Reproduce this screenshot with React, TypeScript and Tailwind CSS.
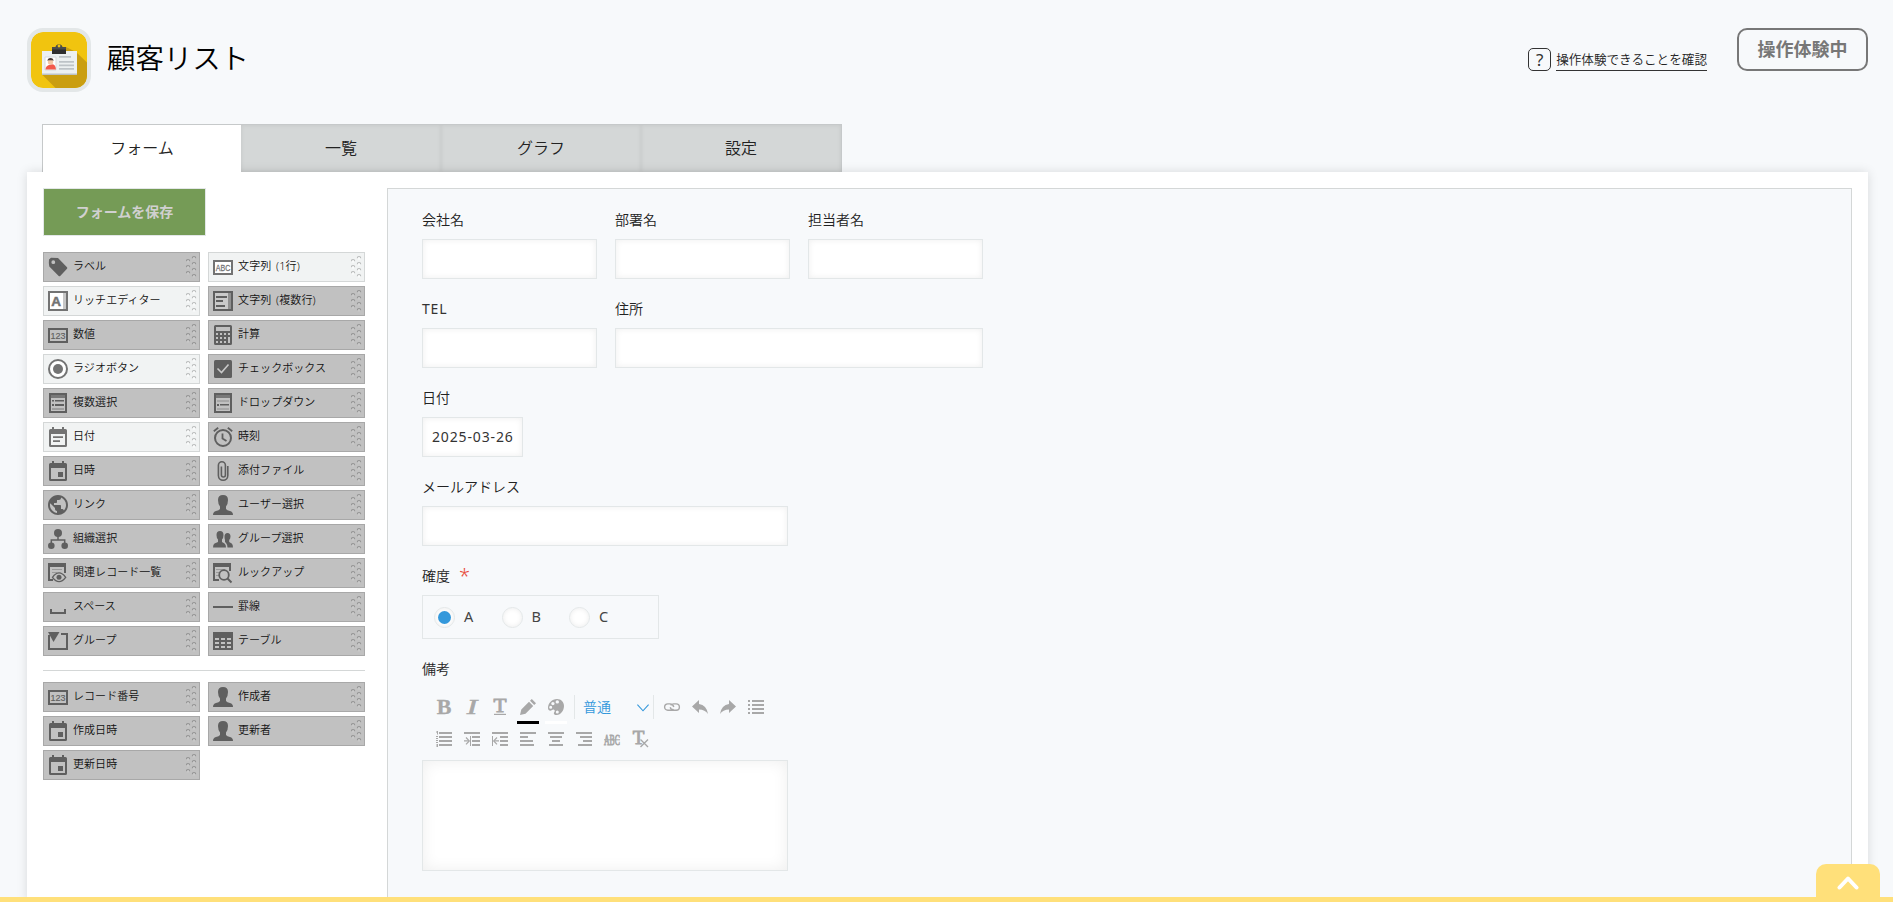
import type { ReactNode } from "react";

type Field = { label: string; icon: ReactNode; light?: boolean };

const Svg = ({ children }: { children: ReactNode }) => (
  <svg viewBox="0 0 20 20" className="h-5 w-5 shrink-0 overflow-visible" fill="currentColor">
    {children}
  </svg>
);

const icons = {
  tag: (
    <Svg>
      <path fillRule="evenodd" d="M1 2.500 3 .7 10 1l9 9.200q.7.8 0 1.500L12.200 19q-.7.7-1.500 0L1.300 9.500Q.5 6 1 2.500zM5.300 3.300a1.900 1.900 0 1 0 0 3.800 1.900 1.900 0 0 0 0-3.800z" />
    </Svg>
  ),
  abc: (
    <Svg>
      <rect x="1" y="4" width="18" height="13" fill="#fff" stroke="currentColor" strokeWidth="2" />
      <text x="10" y="14" textAnchor="middle" fontSize="9.500" stroke="currentColor" strokeWidth=".3" textLength="14.500" lengthAdjust="spacingAndGlyphs" fontFamily="Liberation Sans, sans-serif">ABC</text>
    </Svg>
  ),
  rich: (
    <Svg>
      <rect x="1" y="1" width="18" height="18" fill="#fff" stroke="currentColor" strokeWidth="2" />
      <path d="M15 2h3v16h-3z" opacity=".4" />
      <text x="8" y="14.500" textAnchor="middle" fontSize="13.500" fontWeight="700" stroke="currentColor" strokeWidth=".5" fontFamily="Liberation Sans, sans-serif">A</text>
    </Svg>
  ),
  multi: (
    <Svg>
      <path d="M1 1h18v18H1z" fill="none" stroke="currentColor" strokeWidth="2" />
      <path d="M2 2h13v16H2z" fill="#fff" opacity=".15" />
      <path d="M15 2h3v16h-3z" opacity=".5" />
      <path d="M3 5h11v2H3zM3 9h7v2H3zM3 14h9v2H3z" />
    </Svg>
  ),
  num: (
    <Svg>
      <path d="M1 4h18v13H1z" fill="none" stroke="currentColor" strokeWidth="2" />
      <text x="10" y="14" textAnchor="middle" fontSize="9.500" stroke="currentColor" strokeWidth=".15" textLength="15" lengthAdjust="spacingAndGlyphs" fontFamily="Liberation Sans, sans-serif">123</text>
    </Svg>
  ),
  calc: (
    <Svg>
      <path fillRule="evenodd" d="M2.500 0h15Q19 0 19 1.500v17q0 1.500-1.500 1.500h-15Q1 20 1 18.500v-17Q1 0 2.500 0zM3 2v4h14V2zM3 8v2h2V8zM7 8v2h2V8zM11 8v2h2V8zM15 8v2h2V8zM3 12v2h2v-2zM7 12v2h2v-2zM11 12v2h2v-2zM15 12v6h2v-6zM3 16v2h2v-2zM7 16v2h2v-2zM11 16v2h2v-2z" />
    </Svg>
  ),
  radio: (
    <Svg>
      <circle cx="10" cy="10" r="9" fill="#fff" stroke="currentColor" strokeWidth="2" />
      <circle cx="10" cy="10" r="5" />
    </Svg>
  ),
  check: (
    <Svg>
      <rect x="1" y="1" width="18" height="18" rx="1.500" />
      <path d="M4.500 9.500 8.500 13.500 15.500 5.500" fill="none" stroke="#c9c9c9" strokeWidth="1.600" />
    </Svg>
  ),
  multiSelect: (
    <Svg>
      <path d="M2 1h16v18H2z" fill="none" stroke="currentColor" strokeWidth="2" />
      <path d="M3 2h14v3H3z" opacity=".75" />
      <path d="M4 7h2v1.500H4zM7 7h9v1.500H7zM4 11h2v2H4zM7 11h9v2H7z" />
      <path d="M4 15h12v2H4z" opacity=".35" />
    </Svg>
  ),
  dropdown: (
    <Svg>
      <path d="M2 1h16v18H2z" fill="none" stroke="currentColor" strokeWidth="2" />
      <path d="M3 2h14v3H3z" opacity=".75" />
      <path d="M4 11h2v2H4zM7 11h9v1.500H7z" />
      <path d="M4 7h12v2H4zM4 15h12v2H4z" opacity=".25" />
    </Svg>
  ),
  date: (
    <Svg>
      <path fillRule="evenodd" d="M4 0h2v2h8V0h2v2h1.500Q19 2 19 3.500v15q0 1.500-1.500 1.500h-15Q1 20 1 18.500v-15Q1 2 2.500 2H4zM3 7v11h14V7z" />
      <path d="M5 9.300h10V11H5zM5 13.300h7V15H5z" />
    </Svg>
  ),
  clock: (
    <Svg>
      <circle cx="10" cy="11" r="8" fill="none" stroke="currentColor" strokeWidth="2" />
      <path d="M9.500 6.500V11.500L13.500 14M.8 4.200 5.200.8M19.200 4.200 14.800.8" fill="none" stroke="currentColor" strokeWidth="1.800" />
    </Svg>
  ),
  datetime: (
    <Svg>
      <path fillRule="evenodd" d="M4 0h2v2h8V0h2v2h1.500Q19 2 19 3.500v15q0 1.500-1.500 1.500h-15Q1 20 1 18.500v-15Q1 2 2.500 2H4zM3 7v11h14V7zM10 11h5v5h-5z" />
    </Svg>
  ),
  clip: (
    <Svg>
      <path d="M14.800 5v9.500a4.700 4.700 0 0 1-9.400 0V4.300a3.500 3.500 0 0 1 7 0V14a2 2 0 0 1-4 0V5.500" fill="none" stroke="currentColor" strokeWidth="1.600" />
    </Svg>
  ),
  globe: (
    <svg viewBox="2 2 20 20" className="h-5 w-5 shrink-0" fill="currentColor">
      <path d="M12 2C6.480 2 2 6.480 2 12s4.480 10 10 10 10-4.480 10-10S17.520 2 12 2zm-1 17.930c-3.950-.49-7-3.850-7-7.930 0-.62.080-1.210.21-1.790L9 15v1c0 1.100.9 2 2 2v1.930zm6.900-2.540c-.26-.81-1-1.390-1.900-1.390h-1v-3c0-.55-.45-1-1-1H8v-2h2c.55 0 1-.45 1-1V7h2c1.100 0 2-.9 2-2v-.41c2.930 1.190 5 4.060 5 7.410 0 2.080-.8 3.970-2.100 5.390z" />
    </svg>
  ),
  user: (
    <Svg>
      <path d="M10 0q5 0 5 5 0 4-2 6.500v2.500q1 1.300 4 2 3 .8 3 4H0q0-3.200 3-4 3-.7 4-2v-2.500Q5 9 5 5q0-5 5-5z" />
    </Svg>
  ),
  org: (
    <Svg>
      <circle cx="10" cy="4" r="4" />
      <circle cx="3.300" cy="16.700" r="3.300" />
      <circle cx="16.700" cy="16.700" r="3.300" />
      <path d="M10 7v4M3.300 14v-3h13.400v3" fill="none" stroke="currentColor" strokeWidth="1.500" />
    </Svg>
  ),
  groupUser: (
    <Svg>
      <path d="M7 2q3.500 0 3.500 4 0 3-1.500 4.500v2.500l2.500 1.500q1.500 1 1.500 4H0q0-3 1.500-4L5 13v-2.500Q3.500 9 3.500 6 3.500 2 7 2z" />
      <path d="M14.500 4q3 0 3 3.500 0 2-1.300 3.500v2l2.500 1.500q1.300 1 1.300 4h-5.500q0-3-1.500-4.500l-1-1V11Q11.500 9.500 11.500 7.500 11.500 4 14.500 4z" />
    </Svg>
  ),
  related: (
    <Svg>
      <path d="M1 1h16v9M1 1v16h4" fill="none" stroke="currentColor" strokeWidth="2" />
      <path d="M0 0h18v4H0z" />
      <path d="M4 6h10v1H4zM4 9h5v1H4z" opacity=".4" />
      <path d="M4.500 14.300Q11 5.500 17.700 14.300 11 23 4.500 14.300z" fill="#c1c1c1" stroke="currentColor" strokeWidth="1.300" />
      <circle cx="11" cy="14.300" r="2.500" />
    </Svg>
  ),
  lookup: (
    <Svg>
      <path d="M1 1h16v7M1 1v16h5" fill="none" stroke="currentColor" strokeWidth="2" />
      <path d="M0 0h18v4H0z" />
      <path d="M3 6h9v1H3zM3 9h3v1H3zM3 12h3v1H3z" opacity=".4" />
      <circle cx="11" cy="12" r="4.800" fill="#c1c1c1" stroke="currentColor" strokeWidth="1.800" />
      <path d="M14.500 15.500 18.500 19.500" stroke="currentColor" strokeWidth="2" />
    </Svg>
  ),
  space: (
    <Svg>
      <path d="M2 12h2v3h12v-3h2v5H2z" />
    </Svg>
  ),
  line: (
    <Svg>
      <path d="M0 9h20v2H0z" />
    </Svg>
  ),
  group: (
    <Svg>
      <path d="M1 4v14h18V3h-6" fill="none" stroke="currentColor" strokeWidth="2" />
      <path d="M0 1h11.500L5.500 11z" />
    </Svg>
  ),
  table: (
    <Svg>
      <path fillRule="evenodd" d="M0 1h20v18H0zM2 7v2h4V7zM8 7v2h4V7zM14 7v2h4V7zM2 11v2h4v-2zM8 11v2h4v-2zM14 11v2h4v-2zM2 15v2h4v-2zM8 15v2h4v-2zM14 15v2h4v-2z" />
    </Svg>
  ),
};

const mainFields: Field[] = [
  { label: "ラベル", icon: icons.tag },
  { label: "文字列 (1行)", icon: icons.abc, light: true },
  { label: "リッチエディター", icon: icons.rich, light: true },
  { label: "文字列 (複数行)", icon: icons.multi },
  { label: "数値", icon: icons.num },
  { label: "計算", icon: icons.calc },
  { label: "ラジオボタン", icon: icons.radio, light: true },
  { label: "チェックボックス", icon: icons.check },
  { label: "複数選択", icon: icons.multiSelect },
  { label: "ドロップダウン", icon: icons.dropdown },
  { label: "日付", icon: icons.date, light: true },
  { label: "時刻", icon: icons.clock },
  { label: "日時", icon: icons.datetime },
  { label: "添付ファイル", icon: icons.clip },
  { label: "リンク", icon: icons.globe },
  { label: "ユーザー選択", icon: icons.user },
  { label: "組織選択", icon: icons.org },
  { label: "グループ選択", icon: icons.groupUser },
  { label: "関連レコード一覧", icon: icons.related },
  { label: "ルックアップ", icon: icons.lookup },
  { label: "スペース", icon: icons.space },
  { label: "罫線", icon: icons.line },
  { label: "グループ", icon: icons.group },
  { label: "テーブル", icon: icons.table },
];

const systemFields: Field[] = [
  { label: "レコード番号", icon: icons.num },
  { label: "作成者", icon: icons.user },
  { label: "作成日時", icon: icons.datetime },
  { label: "更新者", icon: icons.user },
  { label: "更新日時", icon: icons.datetime },
];

const Grip = ({ light }: { light?: boolean }) => {
  const dots = [[2, 7], [2, 13], [2, 19], [8, 4], [8, 10], [8, 16], [8, 22]];
  return (
    <svg viewBox="0 0 11 28" className="ml-auto h-7 w-[11px] shrink-0" fill="none">
      {dots.map(([x, y]) => (
        <g key={`${x}-${y}`}>
          <circle cx={x} cy={y + 1} r="1.700" fill={light ? "#fafbfb" : "#c9c9c9"} />
          <path d={`M${x - 1.7} ${y + 1.2}a1.700 1.700 0 0 1 3.400 0`} stroke={light ? "#b9bbbb" : "#949494"} strokeWidth="1.100" />
        </g>
      ))}
    </svg>
  );
};

const Palette = ({ fields }: { fields: Field[] }) => (
  <ul className="grid grid-cols-[157px_157px] gap-x-2 gap-y-1">
    {fields.map((f) => (
      <li
        key={f.label}
        className={
          f.light
            ? "flex h-[30px] items-center border border-[#d4d7d7] bg-[#f1f3f3] pr-0.5 pl-1 text-[#737373]"
            : "flex h-[30px] items-center border border-[#a8a8a8] bg-[#c1c1c1] pr-0.5 pl-1 text-[#5f5f5f]"
        }
      >
        {f.icon}
        <span
          className={
            f.label.includes("(")
              ? "-mt-0.5 ml-[5px] text-[11px] leading-4 tracking-[0.15px] whitespace-nowrap text-[#111] [word-spacing:1.500px]"
              : "-mt-0.5 ml-[5px] text-[11px] leading-4 tracking-[0.05px] whitespace-nowrap text-[#111]"
          }
        >
          {f.label}
        </span>
        <Grip light={f.light} />
      </li>
    ))}
  </ul>
);

const FormField = ({ label, className, required, children }: { label: string; className: string; required?: boolean; children?: ReactNode }) => (
  <div className={className}>
    <div className="mb-1 flex h-[30px] items-center text-sm text-[#222]">
      <span className={label === "TEL" ? "font-normal tracking-[0.8px] text-[#333]" : ""}>{label}</span>
      {required && <span className="ml-[9px] text-[20px] leading-5 text-[#e74c3c]">*</span>}
    </div>
    {children ?? <Input />}
  </div>
);

const Input = ({ value }: { value?: string }) => (
  <div className="flex h-10 items-center border border-[#e3e7e8] bg-white px-[9px] text-sm font-normal tracking-[0.86px] whitespace-nowrap text-[#333] shadow-[inset_0_0_6px_rgba(0,0,0,0.07)]">
    {value}
  </div>
);

const Tool = ({ children, bar }: { children: ReactNode; bar?: string }) => (
  <div className="relative flex h-8 w-7 items-center justify-center text-[#a8a8a8]">
    <svg viewBox="0 0 16 16" className="h-4 w-4 overflow-visible" fill="currentColor">
      {children}
    </svg>
    {bar && <span className={`absolute bottom-[-1px] left-[3px] h-[3px] w-[22px] ${bar}`} />}
  </div>
);

const serif = "Liberation Serif, serif";

const Toolbar = () => (
  <div className="ml-2 pt-[3px]">
    <div className="flex h-8 items-center">
      <Tool><text x="8" y="15" textAnchor="middle" fontSize="22" fontWeight="700" stroke="currentColor" strokeWidth=".3" fontFamily={serif}>B</text></Tool>
      <Tool><text x="8" y="15" textAnchor="middle" fontSize="22" fontStyle="italic" stroke="currentColor" strokeWidth=".6" textLength="10.500" lengthAdjust="spacingAndGlyphs" fontFamily={serif}>I</text></Tool>
      <Tool>
        <text x="8" y="12.500" textAnchor="middle" fontSize="19" stroke="currentColor" strokeWidth=".9" textLength="13" lengthAdjust="spacingAndGlyphs" fontFamily={serif}>T</text>
        <path d="M2 14.800h12V16H2z" />
      </Tool>
      <Tool bar="bg-black">
        <path d="M0 16 1.300 10.500 9 2.800 13.200 7 5.500 14.700zM10 1.800 11.800 0 16 4.200 14.200 6z" />
      </Tool>
      <Tool bar="bg-white">
        <path fillRule="evenodd" d="M9 0c4 0 7 2.800 7 7s-3 9-7.500 9c-3 0-3-2-2-3.300C7.500 11 5.500 9.500 4 11c-1.300 1.300-4 .8-4-2C0 4 4 0 9 0zM9.300 1.200a1.700 1.700 0 1 0 0 3.400 1.700 1.700 0 0 0 0-3.400zM4.900 2.900a1.700 1.700 0 1 0 0 3.400 1.700 1.700 0 0 0 0-3.400zM2.700 6.800a1.500 1.500 0 1 0 0 3 1.500 1.500 0 0 0 0-3zM9.300 11.500a1.500 1.500 0 1 0 0 3 1.500 1.500 0 0 0 0-3z" />
      </Tool>
      <div className="ml-[4px] flex h-6 w-20 items-center border-x border-[#e3e7e8] pr-1 pl-2">
        <span className="text-sm text-[#3498db]">普通</span>
        <svg viewBox="0 0 12 8" className="mt-0.5 ml-auto h-2 w-3" fill="none" stroke="#3498db" strokeWidth="1.100">
          <path d="M.4.7 6 6.800 11.600.7" />
        </svg>
      </div>
      <div className="ml-1 flex">
        <Tool>
          <path d="M9.300 9.800A3.500 3.500 0 0 1 6 11.300H3.800a3.200 3.200 0 0 1 0-6.400H6Q9 5 9.800 8M6.700 6.400A3.500 3.500 0 0 1 10 4.900h2.200a3.200 3.200 0 0 1 0 6.400H10Q7 11.200 6.200 8.200" fill="none" stroke="currentColor" strokeWidth="1.400" />
        </Tool>
        <Tool><path d="M0 7.500 7 1v4q7.500.8 9 10-3-4.500-9-4.500V14z" /></Tool>
        <Tool><path d="M16 7.500 9 1v4q-7.500.8-9 10 3-4.500 9-4.500V14z" /></Tool>
        <Tool><path d="M0 1h2v2H0zM4 1h12v2H4zM0 5h2v2H0zM4 5h12v2H4zM0 9h2v2H0zM4 9h12v2H4zM0 13h2v2H0zM4 13h12v2H4z" /></Tool>
      </div>
    </div>
    <div className="flex h-8 items-center">
      <Tool><path d="M3 1h13v2H3zM3 5h13v2H3zM3 9h13v2H3zM3 13h13v2H3zM1 0h1v3.500H1zM0 .5h1v1H0zM0 5h2v1H0zM0 7h2v1H0zM0 9h2v1H0zM0 11h2v1H0zM.5 13h1.500v3H.5z" /></Tool>
      <Tool><path d="M0 1h16v2H0zM8 5h8v2H8zM8 9h8v2H8zM8 13h8v2H8zM6 5h1v10H6zM0 9.300h5v1.200H0z" /><path d="M2 6.500 5.300 9.900 2 13.300" fill="none" stroke="currentColor" strokeWidth="1.200" /></Tool>
      <Tool><path d="M0 1h16v2H0zM8 5h8v2H8zM8 9h8v2H8zM8 13h8v2H8zM0 5h1v10H0zM2 9.300h5v1.200H2z" /><path d="M5 6.500 1.700 9.900 5 13.300" fill="none" stroke="currentColor" strokeWidth="1.200" /></Tool>
      <Tool><path d="M0 1h16v2H0zM0 5h8v2H0zM0 9h13v2H0zM0 13h8v2H0zM8 13h6v2H8z" /></Tool>
      <Tool><path d="M0 1h16v2H0zM2 5h12v2H2zM4 9h8v2H4zM1 13h14v2H1z" /></Tool>
      <Tool><path d="M0 1h16v2H0zM4 5h12v2H4zM7 9h9v2H7zM2 13h14v2H2z" /></Tool>
      <Tool>
        <text x="16" y="13.500" transform="scale(.5 1)" textAnchor="middle" fontSize="15.500" stroke="currentColor" strokeWidth="1" fontFamily={serif}>ABC</text>
        <path d="M0 8.300h16v1H0z" />
      </Tool>
      <Tool>
        <text x="6.500" y="12.500" textAnchor="middle" fontSize="19" stroke="currentColor" strokeWidth=".9" fontFamily={serif}>T</text>
        <path d="M8.500 8.500 16 16M16 8.500 8.500 16" stroke="currentColor" strokeWidth="1.400" />
      </Tool>
    </div>
  </div>
);

const AppIcon = () => (
  <svg viewBox="0 0 56 56" className="h-16 w-16 shrink-0 rounded-[16px] border-4 border-[#e3e7e8] bg-[#e3e7e8]">
    <rect width="56" height="56" rx="12" fill="#f1c40f" />
    <path d="M35 15 45 20 56 30.500V44Q56 56 44 56H24.500L11 42.500z" fill="#ca9e10" />
    <path d="M11 19h35v24H11z" fill="#ecf0f1" />
    <path d="M11 41.500h35V43H11z" fill="#bdc3c7" />
    <path d="M28 24h12v1.800H28zM28 29h15v1.800H28zM28 32.500h15v1.800H28zM28 36h15v1.800H28z" fill="#bdc3c7" />
    <path d="M14 25h11v13H14z" fill="#fff" stroke="#d5d9dc" />
    <path d="M14.500 37.500q0-4 5-5t5.500 5z" fill="#f2594b" />
    <circle cx="19.500" cy="30" r="2.700" fill="#f3c6a5" />
    <path d="M16.500 29q0-3 3-3t3 3l-1-.7h-4z" fill="#4a3a36" />
    <path d="M21 15h3.500a3.600 3.600 0 0 1 7 0H35v3.500H21z" fill="#4b4b4b" />
    <path d="M21 17.500h14V22H21z" fill="#2f2f2f" />
    <circle cx="28" cy="14" r="1.400" fill="#f1c40f" />
  </svg>
);

const Radio = ({ label, checked }: { label: string; checked?: boolean }) => (
  <div className="flex w-[67.500px] items-center">
    <span className="flex h-[21px] w-[21px] items-center justify-center rounded-full border border-[#e3e7e8] bg-white shadow-[inset_0_0_5px_rgba(0,0,0,0.08)]">
      {checked && <span className="h-[13px] w-[13px] rounded-full bg-[#3498db]" />}
    </span>
    <span className="mb-0.5 ml-[9px] text-[14.500px] leading-5 font-normal text-[#444]">{label}</span>
  </div>
);

export default function App() {
  return (
    <div className="relative flex h-screen flex-col overflow-hidden bg-[#f7f9fb] pr-[25px] pl-[27px] font-['Noto_Sans','Noto_Sans_CJK_JP',sans-serif] font-[350]">
      <header className="flex h-[124px] shrink-0 items-start pt-7">
        <AppIcon />
        <h1 className="mt-[9px] ml-4 text-[28.400px] leading-[42px] text-black">顧客リスト</h1>
        <div className="mt-5 ml-auto flex items-center">
          <span className="flex h-[23px] w-[23px] items-center justify-center rounded-[5px] border border-[#333] text-[17px] leading-none font-normal text-[#333]">?</span>
          <a className="ml-[5px] flex h-[22px] items-end border-b border-[#333] text-[12.600px] leading-5 text-[#222]">操作体験できることを確認</a>
        </div>
        <div className="ml-[30px] flex h-[43px] w-[131px] items-center justify-center rounded-[10px] border-2 border-[#777] text-[18px] font-bold text-[#777]">操作体験中</div>
      </header>

      <nav className="ml-[15px] flex h-12 w-[800px] shrink-0 border border-b-0 border-[#c6c9ca] text-base text-[#222]">
        <a className="z-10 flex w-[198px] items-center justify-center bg-white pb-0.5">フォーム</a>
        {["一覧", "グラフ", "設定"].map((t) => (
          <a key={t} className="flex flex-1 items-center justify-center bg-[#d4d7d7] pb-0.5 shadow-[inset_0_0_4px_rgba(0,0,0,0.08)]">
            {t}
          </a>
        ))}
      </nav>

      <main className="flex min-h-0 flex-1 bg-white pt-4 pr-4 pl-4 shadow-[0_0_10px_rgba(0,0,0,0.13)]">
        <aside className="w-[344px] shrink-0">
          <button className="mb-4 flex h-12 w-[163px] items-center justify-center border border-[#e3e7e8] bg-[#759b56] text-sm font-bold text-[#d0d0d0]">フォームを保存</button>
          <Palette fields={mainFields} />
          <hr className="mt-3.5 mb-[11px] w-[322px] border-[#d4d7d7]" />
          <Palette fields={systemFields} />
        </aside>

        <section className="flex flex-1 flex-col gap-[15px] border border-b-0 border-[#d4d7d7] bg-[#f7f9fb] pt-4 pl-[34px]">
          <div className="flex gap-[18px]">
            <FormField label="会社名" className="w-[175px]" />
            <FormField label="部署名" className="w-[175px]" />
            <FormField label="担当者名" className="w-[175px]" />
          </div>
          <div className="flex gap-[18px]">
            <FormField label="TEL" className="w-[175px]" />
            <FormField label="住所" className="w-[368px]" />
          </div>
          <FormField label="日付" className="w-[101px]">
            <Input value="2025-03-26" />
          </FormField>
          <FormField label="メールアドレス" className="w-[366px]" />
          <FormField label="確度" required className="w-[237px]">
            <div className="flex h-11 items-center border border-[#e3e7e8] pl-[11px]">
              <Radio label="A" checked />
              <Radio label="B" />
              <Radio label="C" />
            </div>
          </FormField>
          <FormField label="備考" className="w-[366px]">
            <Toolbar />
            <div className="mt-[5px] h-[111px] border border-[#e3e7e8] bg-white shadow-[inset_0_0_15px_rgba(0,0,0,0.07)]" />
          </FormField>
        </section>
      </main>

      <div className="absolute inset-x-0 bottom-0 z-20 h-[38px]">
        <div className="absolute inset-x-0 bottom-0 h-[5px] bg-[#ffe07a]" />
        <div className="absolute right-[13px] bottom-0 flex h-[38px] w-16 justify-center rounded-t-[10px] bg-[#ffe07a] pt-3">
          <svg viewBox="0 0 22 14" className="h-3.5 w-[22px]" fill="none" stroke="#fff" strokeWidth="4" strokeLinecap="round" strokeLinejoin="round">
            <path d="M2.500 11.500 11 2.500 19.500 11.500" />
          </svg>
        </div>
      </div>
    </div>
  );
}
